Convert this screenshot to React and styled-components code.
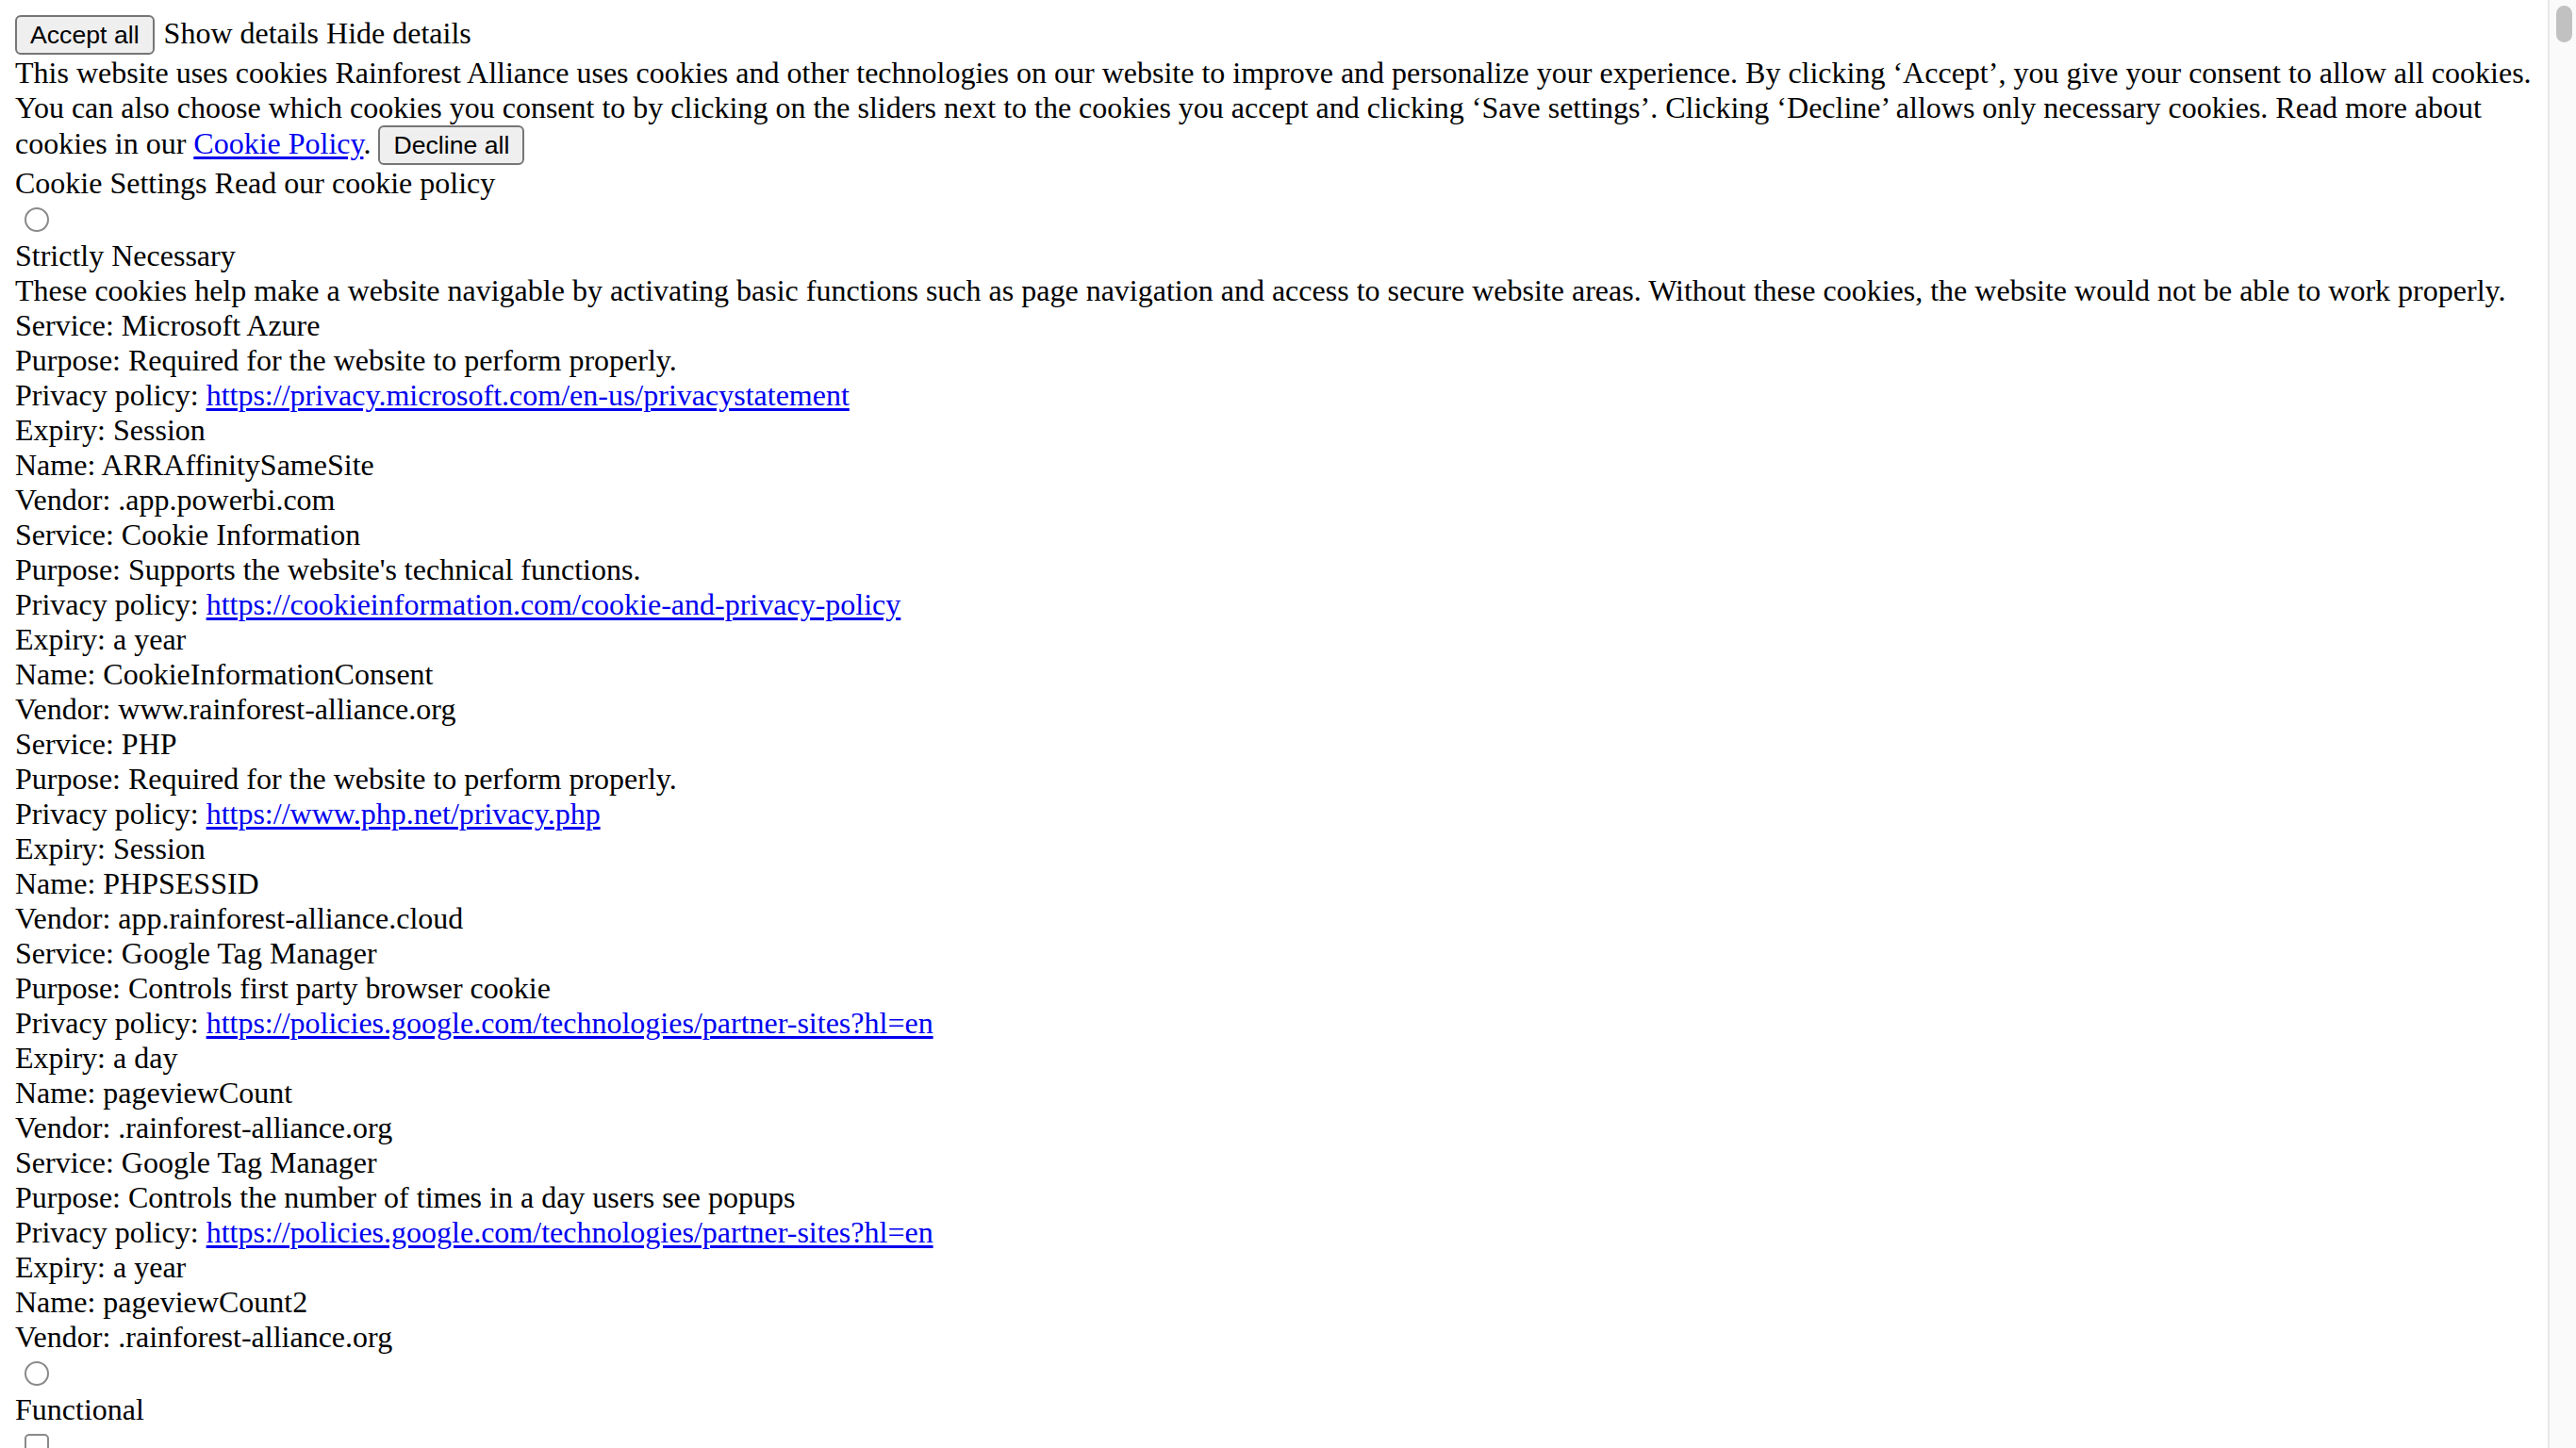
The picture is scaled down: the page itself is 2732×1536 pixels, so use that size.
import React from "react";
import styled, { createGlobalStyle } from "styled-components";

const GlobalStyle = createGlobalStyle`
    html, body {
        background: #ffffff;
    }
    body {
        margin: 16px 46px 16px 16px;
        font-family: "Liberation Serif", "Times New Roman", serif;
        font-size: 32px;
        color: #000000;
    }
`;

const services = [
    {
        service: "Microsoft Azure",
        purpose: "Required for the website to perform properly.",
        policy: "https://privacy.microsoft.com/en-us/privacystatement",
        expiry: "Session",
        name: "ARRAffinitySameSite",
        vendor: ".app.powerbi.com",
    },
    {
        service: "Cookie Information",
        purpose: "Supports the website's technical functions.",
        policy: "https://cookieinformation.com/cookie-and-privacy-policy",
        expiry: "a year",
        name: "CookieInformationConsent",
        vendor: "www.rainforest-alliance.org",
    },
    {
        service: "PHP",
        purpose: "Required for the website to perform properly.",
        policy: "https://www.php.net/privacy.php",
        expiry: "Session",
        name: "PHPSESSID",
        vendor: "app.rainforest-alliance.cloud",
    },
    {
        service: "Google Tag Manager",
        purpose: "Controls first party browser cookie",
        policy: "https://policies.google.com/technologies/partner-sites?hl=en",
        expiry: "a day",
        name: "pageviewCount",
        vendor: ".rainforest-alliance.org",
    },
    {
        service: "Google Tag Manager",
        purpose: "Controls the number of times in a day users see popups",
        policy: "https://policies.google.com/technologies/partner-sites?hl=en",
        expiry: "a year",
        name: "pageviewCount2",
        vendor: ".rainforest-alliance.org",
    },
];

const Page = styled.div`
    line-height: 37px;
`;

const Line = styled.div`
    min-height: 37px;
`;

const Button = styled.button`
    box-sizing: border-box;
    height: 42px;
    font-family: "Liberation Sans", Arial, sans-serif;
    font-size: 26.67px;
    line-height: 31px;
    color: #000000;
    background: #efefef;
    border: 2px solid #767676;
    border-radius: 6px;
    padding: 0 14px;
    margin: 0 2px 1px 0;
    vertical-align: baseline;
`;

const A = styled.a`
    color: #0000ee;
    text-decoration: underline;
    text-underline-offset: 3px;
`;

const ToggleRow = styled.div`
    height: 40px;
    display: flex;
    align-items: center;
`;

const Toggle = styled.span`
    display: inline-block;
    box-sizing: border-box;
    width: 26px;
    height: 26px;
    margin: 0 0 0 10px;
    border: 2px solid #8a8a8a;
    border-radius: ${(p) => (p.$square ? "5px" : "50%")};
    background: #ffffff;
`;

const Scrollbar = styled.div`
    position: fixed;
    top: 0;
    right: 0;
    width: 30px;
    height: 100vh;
    background: #fafafa;
    border-left: 2px solid #e8e8e8;
    box-sizing: border-box;
`;

const Thumb = styled.div`
    margin: 6px 0 0 7px;
    width: 17px;
    height: 39px;
    border-radius: 9px;
    background: #c1c1c1;
`;

function App() {
    return (
        <>
            <GlobalStyle />
            <Page>
                <Line>
                    <Button>Accept all</Button> Show details Hide details
                </Line>
                <Line>
                    This website uses cookies Rainforest Alliance uses cookies
                    and other technologies on our website to improve and
                    personalize your experience. By clicking ‘Accept’, you give
                    your consent to allow all cookies. You can also choose which
                    cookies you consent to by clicking on the sliders next to
                    the cookies you accept and clicking ‘Save settings’.
                    Clicking ‘Decline’ allows only necessary cookies. Read more
                    about cookies in our <A href="#">Cookie Policy</A>.{" "}
                    <Button>Decline all</Button>
                </Line>
                <Line>Cookie Settings Read our cookie policy</Line>
                <ToggleRow>
                    <Toggle />
                </ToggleRow>
                <Line>Strictly Necessary</Line>
                <Line>
                    These cookies help make a website navigable by activating
                    basic functions such as page navigation and access to secure
                    website areas. Without these cookies, the website would not
                    be able to work properly.
                </Line>
                {services.map((it, i) => (
                    <div key={i}>
                        <Line>Service: {it.service}</Line>
                        <Line>Purpose: {it.purpose}</Line>
                        <Line>
                            Privacy policy: <A href="#">{it.policy}</A>
                        </Line>
                        <Line>Expiry: {it.expiry}</Line>
                        <Line>Name: {it.name}</Line>
                        <Line>Vendor: {it.vendor}</Line>
                    </div>
                ))}
                <ToggleRow>
                    <Toggle />
                </ToggleRow>
                <Line>Functional</Line>
                <ToggleRow>
                    <Toggle $square />
                </ToggleRow>
                <Line>
                    These cookies make it possible for the website to remember
                    the choices you make.
                </Line>
            </Page>
            <Scrollbar>
                <Thumb />
            </Scrollbar>
        </>
    );
}

export default App;
